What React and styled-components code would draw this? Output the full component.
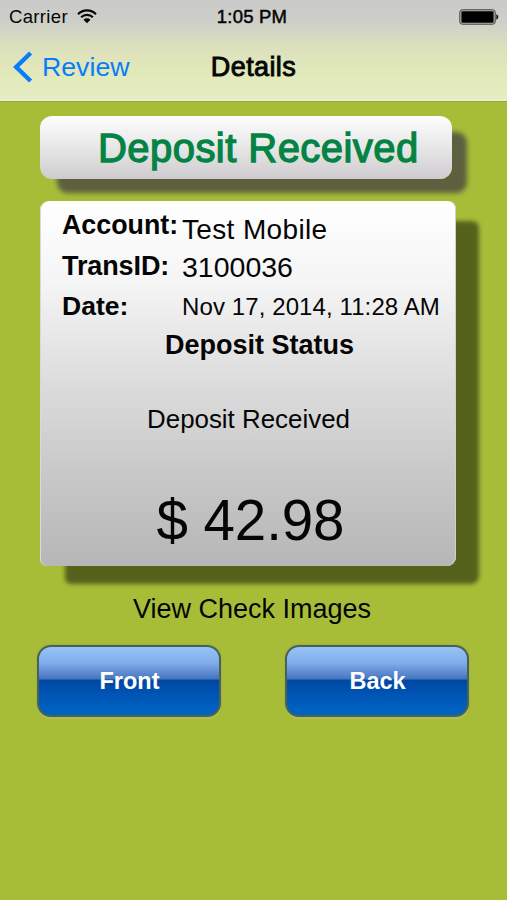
import React from 'react';
import styled, { createGlobalStyle } from 'styled-components';

const COLORS = {
  background: '#a7bd38',
  link: '#087dfb',
  success: '#048444',
};

const GlobalStyle = createGlobalStyle`
  * {
    box-sizing: border-box;
  }

  body {
    margin: 0;
    background: ${COLORS.background};
    font-family: 'Liberation Sans', Arial, sans-serif;
    color: #050505;
  }
`;

const Screen = styled.div`
  width: 507px;
  height: 900px;
  overflow: hidden;
  background: ${COLORS.background};
`;

const Text = styled.span`
  display: block;
  font-size: ${(props) => props.$size}px;
  font-weight: ${(props) => (props.$bold ? 700 : 400)};
  letter-spacing: ${(props) => props.$spacing || 0}px;
  line-height: ${(props) => props.$line || 40}px;
  color: ${(props) => props.$color || 'inherit'};
  -webkit-text-stroke: ${(props) => props.$stroke || 0}px currentColor;
  white-space: nowrap;
`;

const Header = styled.header`
  height: 102px;
  border-bottom: 1px solid #93a348;
  background: linear-gradient(#cacaca 0, #cecfc8 22px, #dce1bd 48px, #e2e9b9 74px, #e5ecc3 99px, #eef4cf 101px);
`;

const StatusBar = styled.div`
  display: grid;
  grid-template-columns: 1fr auto 1fr;
  align-items: center;
  height: 33px;
  padding: 0 8px 0 9px;
`;

const Carrier = styled.div`
  display: flex;
  align-items: center;
  gap: 9px;
`;

const Clock = styled.div`
  margin-right: 4px;
`;

const BatteryIcon = styled.svg`
  justify-self: end;
`;

const NavBar = styled.nav`
  display: grid;
  grid-template-columns: 1fr auto 1fr;
  align-items: center;
  height: 68px;
  padding: 0 13px;
`;

const BackLink = styled.div`
  display: flex;
  align-items: center;
  gap: 9px;
  color: ${COLORS.link};
`;

const Banner = styled.div`
  width: 412px;
  height: 63px;
  margin: 14px 0 0 40px;
  padding-left: 58px;
  border-radius: 12px;
  background: linear-gradient(#fdfdfd, #e8e7e8 50%, #cdcbcd);
  box-shadow: 16px 15px 5px -1px #5c603f;
`;

const Card = styled.section`
  width: 416px;
  height: 365px;
  margin: 22px 0 0 40px;
  padding-top: 5px;
  border-radius: 9px 8px 9px 7px;
  background: linear-gradient(#ffffff, #f5f5f5 22%, #dedede 48%, #c8c8c8 75%, #b7b6b7);
  box-shadow: inset 1px 0 0 #d9dcd2, inset -1px 0 0 #d0d0d0, 24px 19px 4px -1px #55621c;
`;

const DetailRow = styled.div`
  display: grid;
  grid-template-columns: 120px 1fr;
  align-items: start;
  height: ${(props) => props.$height}px;
  padding-left: 22px;
`;

const Centered = styled.div`
  display: flex;
  justify-content: center;
  padding-left: ${(props) => props.$shift || 0}px;
  padding-right: ${(props) => props.$unshift || 0}px;
  margin-top: ${(props) => props.$top || 0}px;
`;

const ButtonRow = styled.div`
  display: flex;
  gap: 64px;
  margin: 16px 0 0 37px;
`;

const GlossyButton = styled.button`
  display: flex;
  justify-content: center;
  align-items: center;
  width: 184px;
  height: 72px;
  padding: 0 0 0 1px;
  border: 2px solid #49605b;
  border-radius: 14px;
  font-family: inherit;
  color: #ffffff;
  background: linear-gradient(#9bc6f7 0, #80acec 18px, #4775be 34px, #0047a3 35px, #0058b7 53px, #0067c6 100%);
  background-origin: border-box;
  box-shadow: 0 0 2px #8aa53d, 0 2px 1px #b5c657;
`;

const WifiIcon = () => (
  <svg width="20" height="15" viewBox="0 0 20 15" fill="none" stroke="#080808">
    <path d="M1 5.2C6 .1 14 .1 19 5.2" strokeWidth="2.1" />
    <path d="M4.1 8.3c3.3-3.2 8.5-3.2 11.8 0" strokeWidth="2.1" />
    <path d="M6.5 10.7c2-1.8 5-1.8 7 0L10 14.2z" fill="#080808" stroke="none" />
  </svg>
);

const Battery = () => (
  <BatteryIcon width="40" height="16" viewBox="0 0 40 16">
    <rect x=".8" y=".8" width="35.4" height="14.4" rx="2.5" fill="#bfc0b5" stroke="#3e4038" />
    <rect x="2.4" y="2.2" width="32.2" height="11.6" rx="1" fill="#000" />
    <path d="M37.3 5.3c2.6.8 2.6 4.6 0 5.4z" fill="#111" />
  </BatteryIcon>
);

const Chevron = () => (
  <svg width="20" height="32" viewBox="0 0 20 32" fill="none" stroke={COLORS.link}>
    <path d="M17.6 2 3.2 16l14.4 14" strokeWidth="4.4" />
  </svg>
);

const App = () => (
  <>
    <GlobalStyle />
    <Screen>
      <Header>
        <StatusBar>
          <Carrier>
            <Text $size={18.5} $spacing={0.35} $line={33}>Carrier</Text>
            <WifiIcon />
          </Carrier>
          <Clock>
            <Text $size={18.5} $spacing={0.2} $stroke={0.5} $line={33}>1:05 PM</Text>
          </Clock>
          <Battery />
        </StatusBar>
        <NavBar>
          <BackLink>
            <Chevron />
            <Text $size={26.7}>Review</Text>
          </BackLink>
          <Text $size={27} $spacing={0.4} $stroke={0.9}>Details</Text>
        </NavBar>
      </Header>

      <Banner>
        <Text $size={40} $spacing={0.45} $stroke={1.3} $line={64} $color={COLORS.success}>
          Deposit Received
        </Text>
      </Banner>

      <Card>
        <DetailRow $height={43}>
          <Text $size={26.8} $line={39} $bold>Account:</Text>
          <Text $size={28} $spacing={0.35} $line={47}>Test Mobile</Text>
        </DetailRow>
        <DetailRow $height={38}>
          <Text $size={27} $line={35} $spacing={-0.1} $bold>TransID:</Text>
          <Text $size={28.5} $line={37}>3100036</Text>
        </DetailRow>
        <DetailRow $height={40}>
          <Text $size={26.5} $line={38} $bold>Date:</Text>
          <Text $size={24} $spacing={0.1}>Nov 17, 2014, 11:28 AM</Text>
        </DetailRow>
        <Centered $shift={23}>
          <Text $size={27} $line={37} $bold>Deposit Status</Text>
        </Centered>
        <Centered $top={35} $shift={1}>
          <Text $size={25.9}>Deposit Received</Text>
        </Centered>
        <Centered $top={51} $shift={5}>
          <Text $size={56.5} $spacing={-0.1} $line={62}>$ 42.98</Text>
        </Centered>
      </Card>

      <Centered $top={23} $unshift={3}>
        <Text $size={27}>View Check Images</Text>
      </Centered>
      <ButtonRow>
        <GlossyButton>
          <Text $size={23.5} $bold>Front</Text>
        </GlossyButton>
        <GlossyButton>
          <Text $size={23.5} $bold>Back</Text>
        </GlossyButton>
      </ButtonRow>
    </Screen>
  </>
);

export default App;
